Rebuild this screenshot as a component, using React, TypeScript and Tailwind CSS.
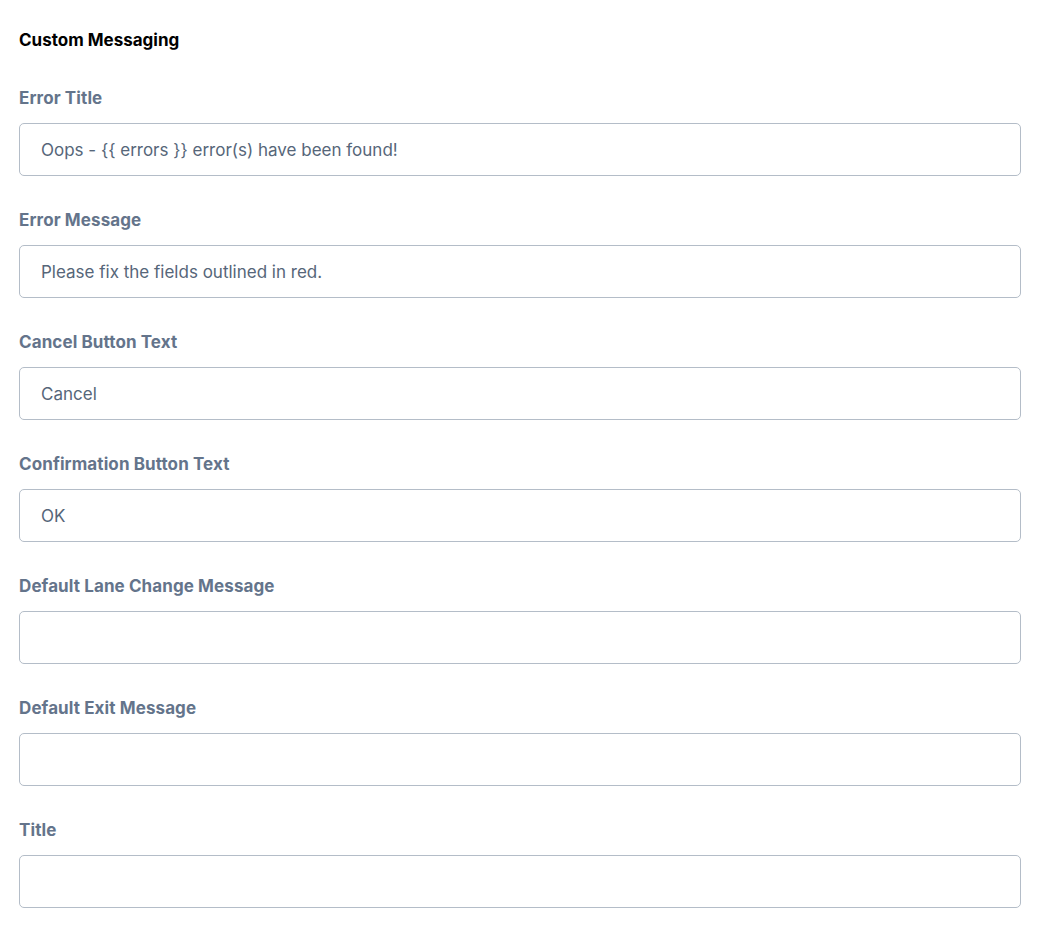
import { useState } from "react";

const fields = [
  { label: "Error Title", value: "Oops - {{ errors }} error(s) have been found!" },
  { label: "Error Message", value: "Please fix the fields outlined in red." },
  { label: "Cancel Button Text", value: "Cancel" },
  { label: "Confirmation Button Text", value: "OK" },
  { label: "Default Lane Change Message", value: "" },
  { label: "Default Exit Message", value: "" },
  { label: "Title", value: "" },
];

export default function App() {
  const [values, setValues] = useState(fields.map((f) => f.value));

  return (
    <div className="min-h-screen bg-white px-[19px] pt-[28px] font-['Inter',sans-serif] w-[1040px]">
      <h2 className="text-[17px] leading-6 font-bold text-black">Custom Messaging</h2>

      <div className="mt-[34px] flex flex-col gap-[32px]">
        {fields.map((f, i) => (
          <div key={f.label} className="flex flex-col gap-[13px]">
            <label className="text-[17px] leading-6 font-bold tracking-[0.1px] text-[#64748b]">{f.label}</label>
            <input
              type="text"
              value={values[i]}
              onChange={(e) => {
                const next = [...values];
                next[i] = e.target.value;
                setValues(next);
              }}
              className="h-[53px] w-full rounded-[5px] border border-[#b4bdc8] bg-white px-[21px] text-[17px] text-[#566679] outline-none"
            />
          </div>
        ))}
      </div>
    </div>
  );
}
